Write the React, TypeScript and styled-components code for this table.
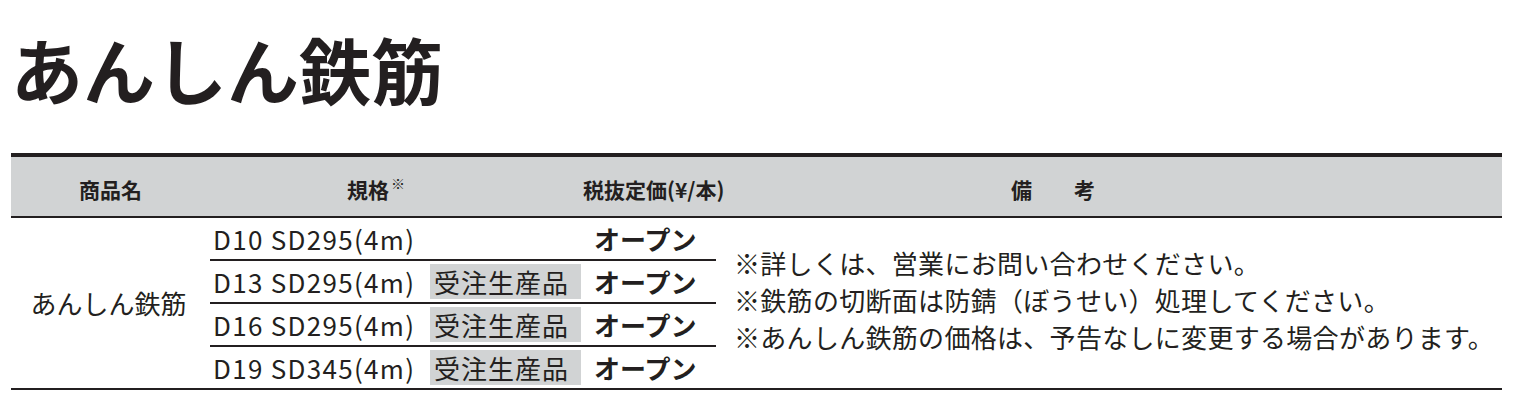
import React from "react";
import styled, { createGlobalStyle } from "styled-components";

const GlobalStyle = createGlobalStyle`
  html, body { margin: 0; padding: 0; background: #ffffff; }
  body {
    font-family: "Noto Sans CJK JP", "Noto Sans", sans-serif;
    color: #231f20;
  }
`;

const INK = "#231f20";
const GRAY = "#d1d3d4";

const Page = styled.div`
  padding: 32px 14px 0 11px;
`;

const Title = styled.h1`
  margin: 0;
  font-size: 72px;
  line-height: 72px;
  font-weight: 700;
  color: ${INK};
`;

const Table = styled.div`
  margin-top: 49px;
`;

const HeaderRow = styled.div`
  display: flex;
  align-items: center;
  box-sizing: border-box;
  height: 65px;
  padding-top: 5px;
  background: ${GRAY};
  border-top: 4px solid ${INK};
  border-bottom: 2px solid ${INK};
  font-size: 21px;
  font-weight: 700;
  line-height: 1;
  white-space: nowrap;
`;

const HeadCell = styled.div<{ $w?: number; $pad?: number; $center?: boolean }>`
  ${(p) => (p.$w ? `width: ${p.$w}px; flex: none;` : "flex: 1;")}
  padding-left: ${(p) => p.$pad ?? 0}px;
  box-sizing: border-box;
  text-align: ${(p) => (p.$center ? "center" : "left")};
`;

const Mark = styled.span`
  position: relative;
  top: -9px;
  margin-left: 2px;
  font-size: 14px;
  font-weight: 400;
`;

const Body = styled.div`
  display: grid;
  grid-template-columns: 199px 506px 1fr;
  border-bottom: 2px solid ${INK};
  font-size: 26px;
  line-height: 1;
`;

const NameCell = styled.div`
  display: flex;
  align-items: center;
  justify-content: center;
  padding-right: 4px;
`;

const ProductList = styled.div`
  display: flex;
  flex-direction: column;
`;

const ProductRow = styled.div`
  display: grid;
  grid-template-columns: 220px 151px 1fr;
  align-items: center;
  height: 41px;
  & + & {
    border-top: 2px solid ${INK};
  }
`;

const Spec = styled.div`
  padding-left: 3px;
  letter-spacing: 1.3px;
  white-space: nowrap;
`;

const Badge = styled.div<{ $show: boolean }>`
  height: 35px;
  display: flex;
  align-items: center;
  padding-left: 4px;
  letter-spacing: 1px;
  background: ${(p) => (p.$show ? GRAY : "transparent")};
  white-space: nowrap;
`;

const Price = styled.div`
  padding-left: 13px;
  font-weight: 700;
  white-space: nowrap;
`;

const Notes = styled.div`
  display: flex;
  flex-direction: column;
  justify-content: center;
  padding: 0 0 8px 18px;
  line-height: 37px;
  letter-spacing: 0.3px;
  white-space: nowrap;
`;

const rows = [
  { spec: "D10 SD295(4m)", order: false },
  { spec: "D13 SD295(4m)", order: true },
  { spec: "D16 SD295(4m)", order: true },
  { spec: "D19 SD345(4m)", order: true },
];

const notes = [
  "※詳しくは、営業にお問い合わせください。",
  "※鉄筋の切断面は防錆（ぼうせい）処理してください。",
  "※あんしん鉄筋の価格は、予告なしに変更する場合があります。",
];

export default function App() {
  return (
    <>
      <GlobalStyle />
      <Page>
        <Title>あんしん鉄筋</Title>
        <Table>
          <HeaderRow>
            <HeadCell $w={199} $center>
              商品名
            </HeadCell>
            <HeadCell $w={373} $pad={137}>
              規格<Mark>※</Mark>
            </HeadCell>
            <HeadCell $w={133}>税抜定価(¥/本)</HeadCell>
            <HeadCell $pad={295}>備　　考</HeadCell>
          </HeaderRow>
          <Body>
            <NameCell>あんしん鉄筋</NameCell>
            <ProductList>
              {rows.map((r) => (
                <ProductRow key={r.spec}>
                  <Spec>{r.spec}</Spec>
                  <Badge $show={r.order}>{r.order ? "受注生産品" : ""}</Badge>
                  <Price>オープン</Price>
                </ProductRow>
              ))}
            </ProductList>
            <Notes>
              {notes.map((n) => (
                <div key={n}>{n}</div>
              ))}
            </Notes>
          </Body>
        </Table>
      </Page>
    </>
  );
}
